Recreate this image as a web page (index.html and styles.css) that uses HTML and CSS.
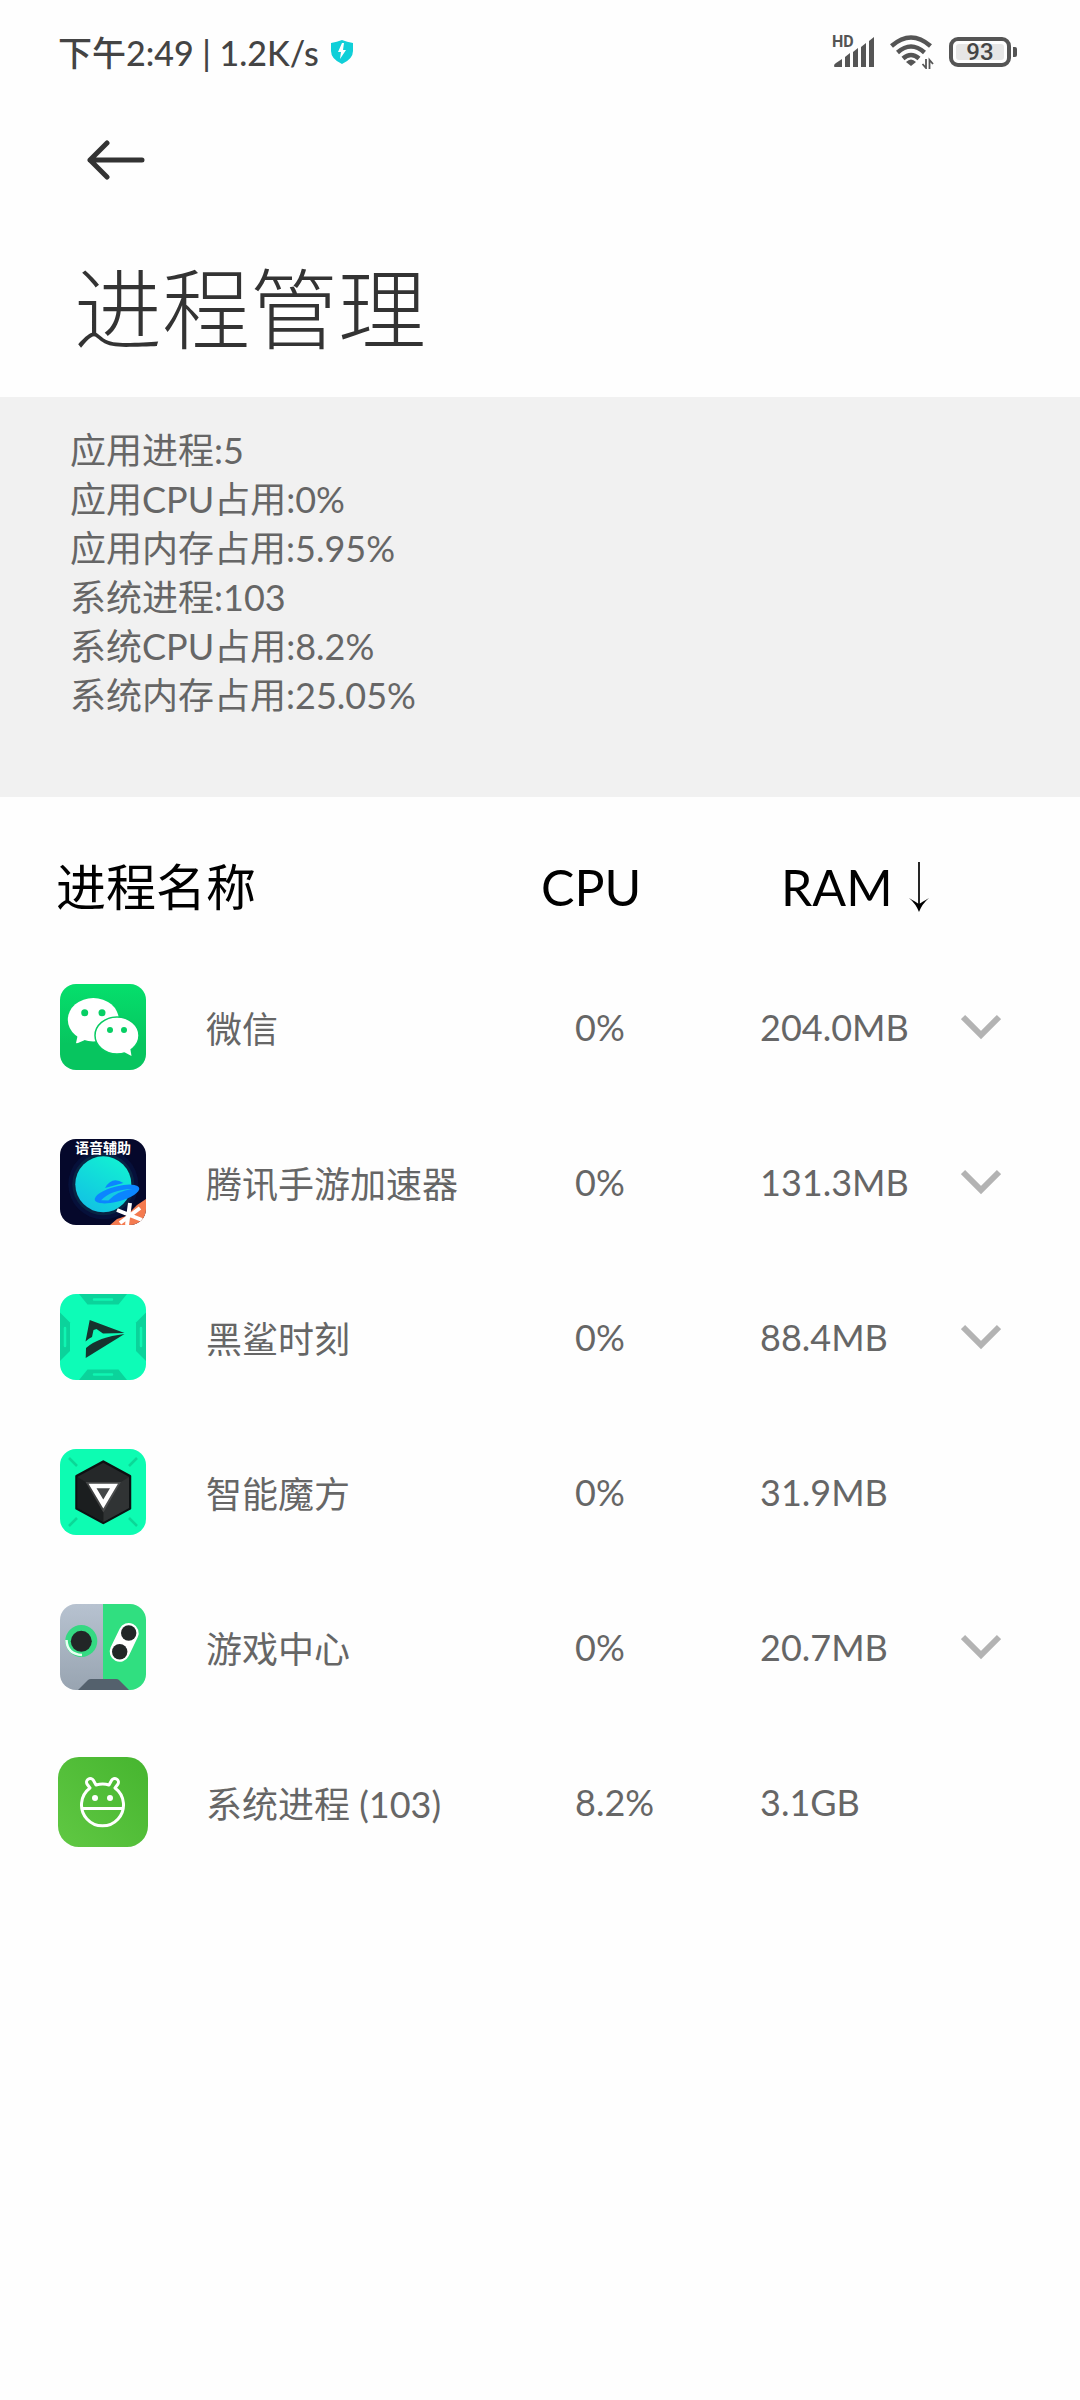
FILE: index.html
```html
<!DOCTYPE html>
<html lang="zh-CN">

<head>
    <meta charset="UTF-8">
    <meta name="viewport" content="width=device-width, initial-scale=1.0">
    <title>进程管理</title>
    <link rel="stylesheet" href="styles.css">
</head>

<body>

    <div class="status-bar">
        <span class="status-text">下午2:49 | 1.2K/s</span>
        <svg class="shield" width="22" height="24" viewBox="0 0 22 24">
            <path d="M0 3Q6 2 11 0Q16 2 22 3V11Q22 19 11 24Q0 19 0 11Z" fill="#10cfd8" />
            <path d="M11 3L7 12H10L9 19L15 10H12L13 3Z" fill="#fff" />
        </svg>
        <div class="status-icons">
            <div class="signal">
                <span class="hd">HD</span>
                <svg width="41" height="30" viewBox="0 0 41 30" fill="#555">
                    <path d="M0 29Q0 27 2 26L8 22V30H1Q0 30 0 29Z" />
                    <path d="M11 20L16 16V30H11Z" />
                    <path d="M19 15L24 11V30H19Z" />
                    <path d="M27 10L32 6V30H27Z" />
                    <path d="M35 4L40 0V30H35Z" />
                </svg>
            </div>
            <svg width="44" height="34" viewBox="0 0 44 34" fill="none" stroke="#555" stroke-width="4.500">
                <path d="M1.500 11Q21 -6 40.500 11" />
                <path d="M7.500 17.500Q21 5.500 34.500 17.500" />
                <path d="M13 23.500Q21 16.500 29 23.500" />
                <path d="M16 27Q21 22 26 27L21 31Z" fill="#555" stroke="none" />
                <path d="M36 24V33L32.500 29M39.500 34V25L43 29" stroke-width="1.800" />
            </svg>
            <div class="battery"><span class="battery-level">93</span></div>
        </div>
    </div>

    <header>
        <button class="back-button" type="button" aria-label="返回">
            <svg width="58" height="40" viewBox="0 0 58 40" fill="none" stroke="#333" stroke-width="5" stroke-linecap="round" stroke-linejoin="round">
                <path d="M20 3L3 20L20 37M3 20H55" />
            </svg>
        </button>
        <h1>进程管理</h1>
    </header>

    <ul class="summary">
        <li>应用进程:5</li>
        <li>应用CPU占用:0%</li>
        <li>应用内存占用:5.95%</li>
        <li>系统进程:103</li>
        <li>系统CPU占用:8.2%</li>
        <li>系统内存占用:25.05%</li>
    </ul>

    <table class="process-table">
        <thead>
            <tr>
                <th class="col-name">进程名称</th>
                <th class="col-cpu"><button class="sort-button" type="button">CPU</button></th>
                <th class="col-ram">
                    <button class="sort-button" type="button">RAM
                        <svg width="20" height="50" viewBox="0 0 20 50">
                            <path d="M10 0V42" stroke="#000" stroke-width="1.700" />
                            <path d="M0 36Q7 40 10 42Q13 40 20 36Q13 42 10 50Q7 42 0 36Z" />
                        </svg>
                    </button>
                </th>
                <th class="col-more"></th>
            </tr>
        </thead>
        <tbody>
            <tr>
                <td>
                    <div class="app">
                        <svg class="app-icon" viewBox="-2 -2 90 90">
                            <defs>
                                <linearGradient id="wechat-bg" x1="0" y1="0" x2="0" y2="1">
                                    <stop offset="0" stop-color="#05df6c" />
                                    <stop offset="0.7" stop-color="#07c55f" />
                                </linearGradient>
                            </defs>
                            <rect width="86" height="86" rx="16" fill="url(#wechat-bg)" />
                            <ellipse cx="33.3" cy="35.7" rx="25.5" ry="21.7" fill="#fff" />
                            <path d="M18 50L16 59Q17 60 27 55Z" fill="#fff" />
                            <ellipse cx="57" cy="51.5" rx="22" ry="18.5" fill="#fff" stroke="#07cb62" stroke-width="1.5" />
                            <path d="M64 68L71.500 72L70 63Z" fill="#fff" />
                            <g fill="#07cf64">
                                <circle cx="24.700" cy="28.700" r="3.500" />
                                <circle cx="42" cy="28.700" r="3.500" />
                                <circle cx="50" cy="46" r="3" />
                                <circle cx="64" cy="46" r="3" />
                            </g>
                        </svg>
                        <span>微信</span>
                    </div>
                </td>
                <td>0%</td>
                <td>204.0MB</td>
                <td><button class="more-button" type="button" aria-label="展开微信"><svg width="40" height="26" viewBox="0 0 40 26"><path d="M2 3L20 21L38 3" /></svg></button></td>
            </tr>
            <tr>
                <td>
                    <div class="app">
                        <svg class="app-icon" viewBox="-2 -2 90 90">
                            <defs>
                                <clipPath id="icon-clip"><rect width="86" height="86" rx="16" /></clipPath>
                                <linearGradient id="planet" x1="0.8" y1="0" x2="0.2" y2="1">
                                    <stop offset="0" stop-color="#12f2d2" />
                                    <stop offset="1" stop-color="#12c0e4" />
                                </linearGradient>
                            </defs>
                            <g clip-path="url(#icon-clip)">
                                <rect width="86" height="86" fill="#05082b" />
                                <circle cx="43.300" cy="45.300" r="35" fill="#06103a" />
                                <circle cx="43.300" cy="45.300" r="31" fill="#082443" />
                                <circle cx="43.300" cy="45.300" r="28" fill="url(#planet)" />
                                <g transform="rotate(-15 57 55)" fill="#0b85ff">
                                    <path d="M47 46Q57 36 66 46Z" />
                                    <ellipse cx="57" cy="55" rx="23" ry="7.500" />
                                    <path d="M40 57Q52 49 73 54Q58 52 47 59Z" fill="#14c9e3" />
                                </g>
                                <path d="M50 86L57 80L66 77L77 66L86 60V86Z" fill="#f47b50" />
                                <path d="M70 64L67 86M57 71L82 81M80 69L60 84" stroke="#fff" stroke-width="4" />
                            </g>
                            <text class="icon-caption" x="43" y="14" text-anchor="middle">语音辅助</text>
                        </svg>
                        <span>腾讯手游加速器</span>
                    </div>
                </td>
                <td>0%</td>
                <td>131.3MB</td>
                <td><button class="more-button" type="button" aria-label="展开腾讯手游加速器"><svg width="40" height="26" viewBox="0 0 40 26"><path d="M2 3L20 21L38 3" /></svg></button></td>
            </tr>
            <tr>
                <td>
                    <div class="app">
                        <svg class="app-icon" viewBox="-2 -2 90 90">
                            <g clip-path="url(#icon-clip)">
                                <rect width="86" height="86" fill="#0dfcb7" />
                                <g fill="#0bd39b">
                                    <path d="M19 0L27.500 10.500H58.500L67 0Z" />
                                    <path d="M19 86L27.500 75.500H58.500L67 86Z" />
                                    <path d="M0 18.500L10 28.500V57L0 67Z" />
                                    <path d="M86 18.500L76 28.500V57L86 67Z" />
                                </g>
                                <path d="M34 5.500H52M34 80.500H52M5 34V52M81 34V52" stroke="#10f5b2" stroke-width="2.500" stroke-linecap="round" />
                                <path d="M29.700 26L64.500 39L43 39.500L36.500 35L33.500 36L32 43Q29 44 25.500 47.500Z" fill="#16342e" />
                                <path d="M26 54Q38 43 64.500 40L25.700 64Z" fill="#16342e" />
                            </g>
                        </svg>
                        <span>黑鲨时刻</span>
                    </div>
                </td>
                <td>0%</td>
                <td>88.4MB</td>
                <td><button class="more-button" type="button" aria-label="展开黑鲨时刻"><svg width="40" height="26" viewBox="0 0 40 26"><path d="M2 3L20 21L38 3" /></svg></button></td>
            </tr>
            <tr>
                <td>
                    <div class="app">
                        <svg class="app-icon" viewBox="-2 -2 90 90">
                            <rect width="86" height="86" rx="16" fill="#0dfcb2" />
                            <path d="M9 9L17 17M77 9L69 17M9 77L17 69M77 77L69 69" stroke="#0bd897" stroke-width="2.500" />
                            <path d="M43.300 12.500L70 27V59.500L43.300 74L16.500 59.500V27Z" fill="#252829" stroke="#0c1112" stroke-width="2.500" stroke-linejoin="round" />
                            <path d="M43.300 44V73L69 59V28Z" fill="#303334" />
                            <path d="M17.500 28L43.300 44V73L17.500 59Z" fill="#1b1e1f" />
                            <path d="M29 35H57.500L43.300 59.500Z" fill="none" stroke="#777" stroke-opacity="0.400" stroke-width="4" />
                            <path d="M32.500 37H54L43.300 55Z" fill="#454849" stroke="#fff" stroke-width="4.500" />
                        </svg>
                        <span>智能魔方</span>
                    </div>
                </td>
                <td>0%</td>
                <td>31.9MB</td>
                <td></td>
            </tr>
            <tr>
                <td>
                    <div class="app">
                        <svg class="app-icon" viewBox="-2 -2 90 90">
                            <defs>
                                <linearGradient id="game-bg" x1="0" y1="0" x2="0" y2="1">
                                    <stop offset="0" stop-color="#b7c2d0" />
                                    <stop offset="1" stop-color="#98a4b1" />
                                </linearGradient>
                            </defs>
                            <g clip-path="url(#icon-clip)">
                                <rect width="43" height="86" fill="url(#game-bg)" />
                                <rect x="43" width="43" height="86" fill="#30df80" />
                                <circle cx="21.300" cy="37" r="16" fill="#35d982" />
                                <path d="M6.500 36Q7 50 22 51" fill="none" stroke="#e9fff3" stroke-width="2.500" />
                                <circle cx="21.300" cy="37.300" r="10.500" fill="#222627" />
                                <path d="M68.700 29L59.700 47.700" stroke="#fff" stroke-width="20" stroke-linecap="round" />
                                <circle cx="68.700" cy="29" r="7.700" fill="#222627" />
                                <circle cx="59.700" cy="47.700" r="7.700" fill="#222627" />
                                <path d="M18 86L28 76Q29 75 31 75H56Q58 75 59 76L69 86Z" fill="#54616d" />
                            </g>
                        </svg>
                        <span>游戏中心</span>
                    </div>
                </td>
                <td>0%</td>
                <td>20.7MB</td>
                <td><button class="more-button" type="button" aria-label="展开游戏中心"><svg width="40" height="26" viewBox="0 0 40 26"><path d="M2 3L20 21L38 3" /></svg></button></td>
            </tr>
            <tr>
                <td>
                    <div class="app">
                        <svg class="app-icon" viewBox="0 0 90 90">
                            <defs>
                                <linearGradient id="system-bg" x1="0" y1="1" x2="1" y2="0">
                                    <stop offset="0" stop-color="#60c843" />
                                    <stop offset="1" stop-color="#46b52f" />
                                </linearGradient>
                            </defs>
                            <rect width="90" height="90" rx="21" fill="url(#system-bg)" />
                            <g fill="none" stroke="#fff" stroke-width="3" stroke-linecap="round" stroke-linejoin="round">
                                <path d="M32 31L29 27A3.500 3.500 0 0 1 35.500 23.500L38 28Q45 26 51 28L53.500 23.500A3.500 3.500 0 0 1 60 27L57 31A21 21 0 1 1 32 31Z" />
                                <path d="M25 51.500H64" />
                            </g>
                            <circle cx="37" cy="41" r="3" fill="#fff" />
                            <circle cx="52" cy="41" r="3" fill="#fff" />
                        </svg>
                        <span>系统进程 (103)</span>
                    </div>
                </td>
                <td>8.2%</td>
                <td>3.1GB</td>
                <td></td>
            </tr>
        </tbody>
    </table>

</body>

</html>
```

FILE: styles.css
```css
body {
    font-family: Lato, 'Noto Sans CJK SC', sans-serif;
    font-size: 36px;
    background-color: #fefefe;
    color: #666;
    margin: 0;
}

button {
    font: inherit;
    color: inherit;
    background: none;
    border: none;
    padding: 0;
    cursor: pointer;
}

svg {
    display: block;
}

/* status bar */
.status-bar {
    display: flex;
    align-items: center;
    height: 104px;
    padding: 0 69px 0 58px;
    color: #444;
}

.status-text {
    padding-bottom: 2px;
    font-size: 34px;
    font-weight: 500;
}

.shield {
    margin-left: 12px;
}

.status-icons {
    display: flex;
    align-items: center;
    gap: 15px;
    margin-left: auto;
}

.signal {
    position: relative;
}

.hd {
    position: absolute;
    top: -3px;
    left: -2px;
    font-family: Roboto, sans-serif;
    font-size: 16px;
    line-height: 16px;
    font-weight: bold;
    color: #555;
}

.battery {
    position: relative;
    box-sizing: border-box;
    width: 62px;
    height: 30px;
    padding: 3px;
    border: 4px solid #555;
    border-radius: 9px;
}

.battery::after {
    content: "";
    position: absolute;
    top: 6px;
    right: -10px;
    width: 4px;
    height: 10px;
    border-radius: 0 2px 2px 0;
    background-color: #555;
}

.battery-level {
    display: block;
    border-radius: 3px;
    background-color: #e6e6e6;
    font-family: Roboto, sans-serif;
    font-size: 24px;
    font-weight: 500;
    line-height: 16px;
    text-align: center;
}

/* title */
.back-button {
    display: flex;
    align-items: center;
    height: 112px;
    margin-left: 87px;
}

h1 {
    margin: 0;
    padding: 32px 74px 29px;
    font-size: 88px;
    font-weight: 300;
    line-height: 120px;
    color: #333;
}

.summary {
    margin: 0;
    padding: 29px 70px 77px;
    list-style: none;
    line-height: 49px;
    background-color: #f1f1f1;
}

/* process list */
.process-table {
    width: 100%;
    margin-top: 28px;
    table-layout: fixed;
    border-collapse: collapse;
}

.process-table th {
    box-sizing: border-box;
    height: 124px;
    padding: 0;
    font-size: 50px;
    font-weight: 400;
    line-height: 60px;
    text-align: left;
    color: #000;
}

.process-table td {
    height: 155px;
    padding: 0;
}

.process-table .col-name {
    width: 50%;
    padding-left: 56px;
}

.process-table .col-cpu {
    width: 20%;
    padding-left: 1px;
}

.process-table .col-ram {
    width: 19%;
    padding-left: 25px;
}

.process-table td:nth-child(2) {
    padding-left: 35px;
}

.process-table td:nth-child(3) {
    padding-left: 4px;
}

.app {
    display: flex;
    align-items: center;
    gap: 58px;
    padding-left: 58px;
}

.app-icon {
    width: 90px;
    height: 90px;
}

.icon-caption {
    font-size: 14px;
    font-weight: bold;
    fill: #fff;
}

.sort-button {
    display: flex;
    align-items: center;
    gap: 16px;
}

.more-button {
    display: block;
    padding: 12px 0;
}

.more-button path {
    fill: none;
    stroke: #b3b3b3;
    stroke-width: 6;
}
```
